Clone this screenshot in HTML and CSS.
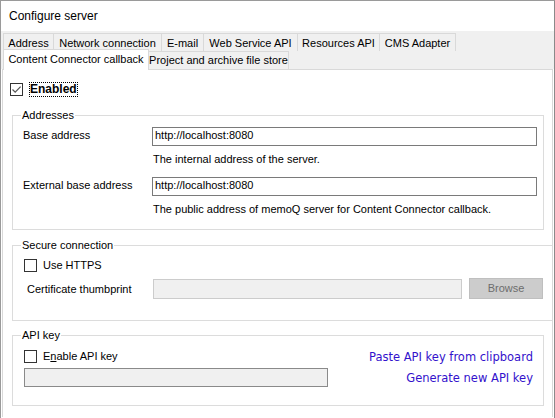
FILE: index.html
```html
<!DOCTYPE html>
<html>
<head>
<meta charset="utf-8">
<link rel="stylesheet" href="styles.css">
</head>
<body>
<div class="window">
  <div class="titlebar">Configure server</div>
  <div class="tabstrip">
    <div class="tabrow row1">
      <div class="tab first w-address">Address</div>
      <div class="tab w-network">Network connection</div>
      <div class="tab w-email">E-mail</div>
      <div class="tab w-web">Web Service API</div>
      <div class="tab w-res">Resources API</div>
      <div class="tab w-cms">CMS Adapter</div>
    </div>
    <div class="tabrow row2">
      <div class="tab selected">Content Connector callback</div>
      <div class="tab w-project">Project and archive file store</div>
    </div>
  </div>
  <div class="panel">
    <div class="enabled-row">
      <span class="cb cb-main"><svg width="11" height="11" viewBox="0 0 11 11"><path d="M1.5 5.5 L4.2 8.2 L9.6 2.6" fill="none" stroke="#555" stroke-width="1.2"/></svg></span>
      <span class="focus">Enabled</span>
    </div>

    <div class="group g-addr">
      <div class="legend">Addresses</div>
      <div class="frow frow-first">
        <div class="flabel">Base address</div>
        <div class="tb">http://localhost:8080</div>
      </div>
      <div class="hint">The internal address of the server.</div>
      <div class="frow frow-second">
        <div class="flabel">External base address</div>
        <div class="tb">http://localhost:8080</div>
      </div>
      <div class="hint">The public address of memoQ server for Content Connector callback.</div>
    </div>

    <div class="group g-secure">
      <div class="legend">Secure connection</div>
      <div class="cbrow">
        <span class="cb"></span>
        <span class="cbtext">Use HTTPS</span>
      </div>
      <div class="certrow">
        <div class="clabel">Certificate thumbprint</div>
        <div class="tb-disabled"></div>
        <div class="btn">Browse</div>
      </div>
    </div>

    <div class="group g-api">
      <div class="legend">API key</div>
      <div class="api-body">
        <div class="api-left">
          <div class="cbrow cbrow-api">
            <span class="cb"></span>
            <span class="cbtext">E<span class="mn">n</span>able API key</span>
          </div>
          <div class="tb-key"></div>
        </div>
        <div class="api-links">
          <div class="link">Paste API key from clipboard</div>
          <div class="link link-second">Generate new API key</div>
        </div>
      </div>
    </div>
  </div>
</div>
</body>
</html>
```
FILE: styles.css
```css
html, body {
  margin: 0;
  padding: 0;
  background: #ffffff;
}
body {
  font-family: "Liberation Sans", Arial, sans-serif;
  font-size: 11px;
  color: #000;
}
.window {
  width: 555px;
  height: 418px;
  box-sizing: border-box;
  border-top: 1px solid #9a9a9a;
  border-left: 1px solid #9a9a9a;
  border-right: 1px solid #8a8a8a;
  overflow: hidden;
  background: #fff;
}
.titlebar {
  height: 30px;
  box-sizing: border-box;
  padding: 8px 0 0 8px;
  font-size: 12px;
  line-height: 14px;
}
.tabstrip {
  background: #f0f0f0;
  height: 38px;
  box-sizing: border-box;
  padding-top: 2px;
}
.tabrow {
  display: flex;
  align-items: flex-start;
  height: 18px;
  margin-left: 2px;
}
.tab {
  box-sizing: border-box;
  height: 18px;
  border-top: 1px solid #d9d9d9;
  border-right: 1px solid #d9d9d9;
  text-align: center;
  line-height: 16px;
  padding-top: 0;
  white-space: nowrap;
}
.row1 .tab { padding-top: 1px; }
.tab.first { border-left: 1px solid #d9d9d9; }
.w-address { width: 51px; }
.w-network { width: 108px; }
.w-email { width: 42px; }
.w-web { width: 94px; }
.w-res { width: 82px; }
.w-cms { width: 76px; }
.w-project { width: 140px; }
.tab.selected {
  position: relative;
  z-index: 2;
  width: 146px;
  height: 21px;
  margin-top: -2px;
  background: #fff;
  border-left: 1px solid #d9d9d9;
  padding-top: 1px;
}
.panel {
  margin: 0 1px;
  border-top: 1px solid #d9d9d9;
  border-left: 1px solid #d9d9d9;
  border-right: 1px solid #d9d9d9;
  height: 348px;
  box-sizing: border-box;
  background: #fff;
}
.enabled-row {
  display: flex;
  align-items: center;
  height: 15px;
  margin-top: 12px;
  padding-left: 7px;
}
.cb {
  display: inline-flex;
  align-items: center;
  justify-content: center;
  width: 13px;
  height: 13px;
  box-sizing: border-box;
  border: 1px solid #333;
  background: #fff;
  flex: none;
}
.focus {
  margin-left: 6px;
  height: 15px;
  box-sizing: border-box;
  border: 1px dotted #000;
  font-weight: bold;
  font-size: 12px;
  line-height: 13px;
  white-space: nowrap;
}
.group {
  box-sizing: border-box;
  border: 1px solid #dcdcdc;
  margin-left: 9px;
}
.g-addr {
  margin-top: 18px;
  width: 532px;
  padding-bottom: 13px;
}
.g-secure {
  margin-top: 15px;
  border-right: none;
  padding-bottom: 21px;
}
.g-api {
  margin-top: 14px;
  width: 532px;
  padding-bottom: 18px;
}
.legend {
  width: fit-content;
  margin: -7px 0 0 8px;
  padding: 0 1px;
  background: #fff;
  line-height: 13px;
  height: 13px;
  white-space: nowrap;
}
.frow {
  display: flex;
  align-items: flex-start;
  height: 19px;
}
.frow-first { margin-top: 5px; }
.frow-second { margin-top: 11px; }
.flabel {
  width: 139px;
  box-sizing: border-box;
  padding: 2px 0 0 10px;
  line-height: 13px;
}
.tb {
  width: 385px;
  height: 19px;
  box-sizing: border-box;
  border: 1px solid #7a7a7a;
  padding-left: 2px;
  line-height: 13px;
  padding-top: 1px;
}
.hint {
  margin-top: 7px;
  margin-left: 140px;
  line-height: 13px;
  white-space: nowrap;
}
.cbrow {
  display: flex;
  align-items: flex-start;
  height: 13px;
  margin-top: 7px;
  padding-left: 11px;
}
.cbrow-api { margin-top: 8px; }
.cbtext {
  margin-left: 6px;
  line-height: 13px;
  white-space: nowrap;
}
.mn { text-decoration: underline; }
.certrow {
  display: flex;
  align-items: flex-start;
  margin-top: 7px;
  height: 20px;
}
.clabel {
  width: 140px;
  box-sizing: border-box;
  padding: 4px 0 0 14px;
  line-height: 13px;
  white-space: nowrap;
}
.tb-disabled {
  width: 309px;
  height: 20px;
  box-sizing: border-box;
  border: 1px solid #cccccc;
  background: #f0f0f0;
}
.btn {
  margin-left: 7px;
  margin-top: -1px;
  width: 74px;
  height: 21px;
  box-sizing: border-box;
  border: 1px solid #bfbfbf;
  background: #cccccc;
  color: #6d6d6d;
  text-align: center;
  line-height: 19px;
}
.api-body {
  display: flex;
  justify-content: space-between;
  align-items: flex-start;
}
.api-left {
  display: flex;
  flex-direction: column;
}
.tb-key {
  margin-top: 5px;
  margin-left: 11px;
  width: 304px;
  height: 19px;
  box-sizing: border-box;
  border: 1px solid #8a8a8a;
  background: #f0f0f0;
}
.api-links {
  display: flex;
  flex-direction: column;
  align-items: flex-end;
  padding-right: 10px;
  padding-top: 9px;
}
.link {
  font-family: "DejaVu Sans", Verdana, sans-serif;
  font-size: 11.5px;
  line-height: 13px;
  color: #3311cc;
  white-space: nowrap;
}
.link-second { margin-top: 8px; }
```
